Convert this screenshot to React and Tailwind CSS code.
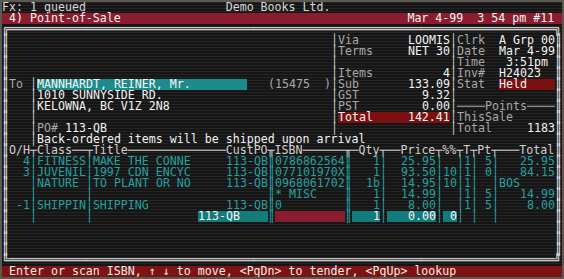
import React from "react";

const S = {
  n: "text-[#d6d6d6]",
  w: "text-[#f2f2f2]",
  g: "text-[#a8a8a8]",
  b: "text-[#e8e8e8]",
  v: "text-[#c4c4c4]",
  h: "text-[#d0d0d0]",
  t: "text-[#22a1a1]",
  tb: "bg-[#1b8b8b] text-[#f6f6f6]",
  ti: "bg-[#127c7c] text-[#f6f6f6]",
  r: "bg-[#8b1c2d] text-[#f4f4f4]",
  rd: "bg-[#7c1010] text-[#f4f4f4]",
  ri: "bg-[#8b1c2d] text-[#f4f4f4]",
  rs: "bg-[#7e1313] text-[#ececec]",
};

function buildGrid() {
  const g = Array.from({ length: 25 }, () =>
    Array.from({ length: 80 }, () => ({ ch: " ", s: "n" }))
  );
  const put = (r, c, text, s) => {
    [...text].forEach((ch, i) => {
      if (c + i < 80) g[r][c + i] = { ch, s };
    });
  };
  const fill = (r, c1, c2, s) => {
    for (let c = c1; c <= c2; c++) g[r][c] = { ch: " ", s };
  };

  // Row 0
  put(0, 0, "Fx: 1 queued", "n");
  put(0, 32, "Demo Books Ltd.", "n");
  // Row 1
  fill(1, 0, 79, "r");
  put(1, 1, "4) Point-of-Sale", "r");
  put(1, 58, "Mar 4-99  3 54 pm #11", "r");
  // Box
  put(2, 0, "╔" + "═".repeat(78) + "╗", "b");
  for (let r = 3; r <= 22; r++) {
    put(r, 0, "║", "b");
    put(r, 79, "║", "b");
  }
  put(23, 0, "╚" + "═".repeat(78) + "╝", "b");

  // Upper panels
  for (let r = 3; r <= 11; r++) {
    put(r, 47, "│", "v");
    put(r, 64, "│", "v");
  }
  put(3, 48, "Via", "g");
  put(3, 58, "LOOMIS", "w");
  put(3, 65, "Clrk", "g");
  put(3, 71, "A Grp 00", "w");
  put(4, 48, "Terms", "g");
  put(4, 58, "NET 30", "w");
  put(4, 65, "Date", "g");
  put(4, 71, "Mar 4-99", "w");
  put(5, 65, "Time", "g");
  put(5, 72, "3:51pm", "w");
  put(6, 48, "Items", "g");
  put(6, 63, "4", "w");
  put(6, 65, "Inv#", "g");
  put(6, 71, "H24023", "w");

  for (let r = 7; r <= 12; r++) put(r, 4, "│", "v");
  put(7, 1, "To", "g");
  fill(7, 5, 34, "tb");
  put(7, 5, "MANNHARDT, REINER, Mr.", "tb");
  put(7, 38, "(15475  )", "g");
  put(7, 48, "Sub", "g");
  put(7, 58, "133.09", "w");
  put(7, 65, "Stat", "g");
  fill(7, 71, 78, "rd");
  put(7, 71, "Held", "rd");

  put(8, 5, "1010 SUNNYSIDE RD.", "w");
  put(8, 48, "GST", "g");
  put(8, 60, "9.32", "w");

  put(9, 5, "KELOWNA, BC V1Z 2N8", "w");
  put(9, 48, "PST", "g");
  put(9, 60, "0.00", "w");
  put(9, 65, "────Points────", "g");

  fill(10, 48, 63, "rd");
  put(10, 48, "Total", "rd");
  put(10, 58, "142.41", "rd");
  put(10, 65, "ThisSale", "g");

  put(11, 5, "PO#", "g");
  put(11, 9, "113-QB", "w");
  put(11, 65, "Total", "g");
  put(11, 75, "1183", "w");

  put(12, 5, "Back-ordered items will be shipped upon arrival", "w");

  // Table header
  put(
    13,
    1,
    "O/H┬Class──┬Title" + "─".repeat(14) + "CustPO╥ISBN──────╥─Qty┬──Price┬%%┬T┬Pt┬───Total",
    "h"
  );

  // Table verticals
  for (let r = 14; r <= 19; r++) {
    put(r, 4, "│", "t");
    put(r, 12, "│", "t");
    put(r, 38, "║", "t");
    put(r, 49, "║", "t");
    put(r, 54, "│", "t");
    put(r, 62, "│", "t");
    put(r, 65, "│", "t");
    put(r, 67, "│", "t");
    put(r, 70, "│", "t");
  }

  const rows = [
    ["4", "FITNESS", "MAKE THE CONNE", "0786862564", " 1", "25.95", "", "1", "5", "   25.95"],
    ["3", "JUVENIL", "1997 CDN ENCYC", "077101970X", " 1", "93.50", "10", "1", "0", "   84.15"],
    ["", "NATURE", "TO PLANT OR NO", "0968061702", "1b", "14.95", "10", "1", "", "BOS"],
    ["", "", "", "* MISC", " 1", "14.99", "", "1", "5", "   14.99"],
    ["-1", "SHIPPIN", "SHIPPING", "0", " 1", " 8.00", "", "1", "5", "    8.00"],
  ];
  rows.forEach((d, i) => {
    const r = 14 + i;
    if (d[0]) put(r, 4 - d[0].length, d[0], "t");
    put(r, 5, d[1], "t");
    put(r, 13, d[2], "t");
    if (d[3] !== "* MISC") put(r, 32, "113-QB", "t");
    put(r, 39, d[3], "t");
    put(r, 52, d[4], "t");
    put(r, 57, d[5], "t");
    if (d[6]) put(r, 63, d[6], "t");
    put(r, 66, d[7], "t");
    if (d[8]) put(r, 69, d[8], "t");
    put(r, 71, d[9], "t");
  });

  // Input row
  fill(19, 28, 37, "ti");
  put(19, 28, "113-QB", "ti");
  fill(19, 39, 48, "ri");
  fill(19, 50, 53, "ti");
  put(19, 53, "1", "ti");
  fill(19, 55, 61, "ti");
  put(19, 58, "0.00", "ti");
  fill(19, 63, 64, "ti");
  put(19, 64, "0", "ti");

  // Status line
  fill(24, 0, 79, "rs");
  put(24, 1, "Enter or scan ISBN, ↑ ↓ to move, <PgDn> to tender, <PgUp> lookup", "rs");

  return g;
}

function Row({ cells }) {
  const runs = [];
  cells.forEach((cell) => {
    const last = runs[runs.length - 1];
    if (last && last.s === cell.s) last.text += cell.ch;
    else runs.push({ s: cell.s, text: cell.ch });
  });
  return (
    <div className="flex h-[11px] leading-[11px] whitespace-pre">
      {runs.map((run, i) => (
        <span
          key={i}
          className={"block h-[11px] shrink-0 overflow-visible " + S[run.s]}
          style={{ width: [...run.text].length * 7 }}
        >
          {run.text}
        </span>
      ))}
    </div>
  );
}

export default function App() {
  const grid = buildGrid();
  return (
    <div className="w-[564px] h-[279px] border-2 border-[#5d5850] bg-[repeating-linear-gradient(180deg,#242424_0px,#242424_1px,#151515_1px,#151515_3px)] overflow-hidden font-['DejaVu_Sans_Mono',monospace] text-[11.627px]">
      {grid.map((cells, r) => (
        <Row key={r} cells={cells} />
      ))}
    </div>
  );
}
